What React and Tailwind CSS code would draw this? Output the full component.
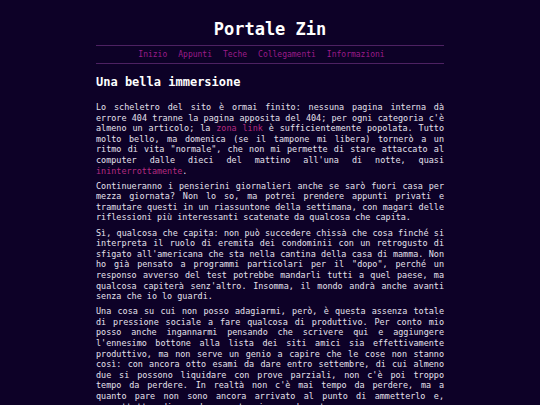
export default function App() {
  const mono = { fontFamily: '"DejaVu Sans Mono", "Liberation Mono", monospace' };
  const nav = ["Inizio", "Appunti", "Teche", "Collegamenti", "Informazioni"];

  return (
    <div className="min-h-[405px] bg-[#0d0127] text-[#e4e0ec]" style={mono}>
      <div className="mx-auto w-[348px] pt-[18px]">
        <header>
          <h1 className="text-center text-[17px] font-bold leading-[22px] text-white">Portale Zin</h1>
          <nav className="mt-[5px] border-y border-[#4d2162] py-[4px]">
            <ul className="flex justify-center gap-[11px] pr-[17px] text-[8px] leading-[9px] text-[#9c1c8a]">
              {nav.map((item) => (
                <li key={item}>
                  <a href="#">{item}</a>
                </li>
              ))}
            </ul>
          </nav>
        </header>

        <main className="mt-[10px]">
          <h2 className="text-[12px] font-bold leading-[16px] text-white">Una bella immersione</h2>

          <div className="mt-[12px] text-justify text-[8.45px] leading-[10.6px]">
            <p className="mb-[4.5px]">
              Lo scheletro del sito è ormai finito: nessuna pagina interna dà errore 404 tranne la pagina apposita
              del 404; per ogni categoria c'è almeno un articolo; la{" "}
              <a href="#" className="text-[#b52b80]">zona link</a> è sufficientemente popolata. Tutto molto bello,
              ma domenica (se il tampone mi libera) tornerò a un ritmo di vita "normale", che non mi permette di
              stare attaccato al computer dalle dieci del mattino all'una di notte, quasi{" "}
              <a href="#" className="text-[#b52b80]">ininterrottamente</a>.
            </p>
            <p className="mb-[4.5px]">
              Continueranno i pensierini giornalieri anche se sarò fuori casa per mezza giornata? Non lo so, ma
              potrei prendere appunti privati e tramutare questi in un riassuntone della settimana, con magari delle
              riflessioni più interessanti scatenate da qualcosa che capita.
            </p>
            <p className="mb-[4.5px]">
              Sì, qualcosa che capita: non può succedere chissà che cosa finché si interpreta il ruolo di eremita
              dei condominii con un retrogusto di sfigato all'americana che sta nella cantina della casa di mamma.
              Non ho già pensato a programmi particolari per il "dopo", perché un responso avverso del test
              potrebbe mandarli tutti a quel paese, ma qualcosa capiterà senz'altro. Insomma, il mondo andrà anche
              avanti senza che io lo guardi.
            </p>
            <p className="mb-[4.5px]">
              Una cosa su cui non posso adagiarmi, però, è questa assenza totale di pressione sociale a fare
              qualcosa di produttivo. Per conto mio posso anche ingannarmi pensando che scrivere qui e aggiungere
              l'ennesimo bottone alla lista dei siti amici sia effettivamente produttivo, ma non serve un genio a
              capire che le cose non stanno così: con ancora otto esami da dare entro settembre, di cui almeno due
              si possono liquidare con prove parziali, non c'è poi troppo tempo da perdere. In realtà non c'è mai
              tempo da perdere, ma a quanto pare non sono ancora arrivato al punto di ammetterlo e, soprattutto, di
              prendere contromisure adeguate.
            </p>
          </div>
        </main>
      </div>
    </div>
  );
}
